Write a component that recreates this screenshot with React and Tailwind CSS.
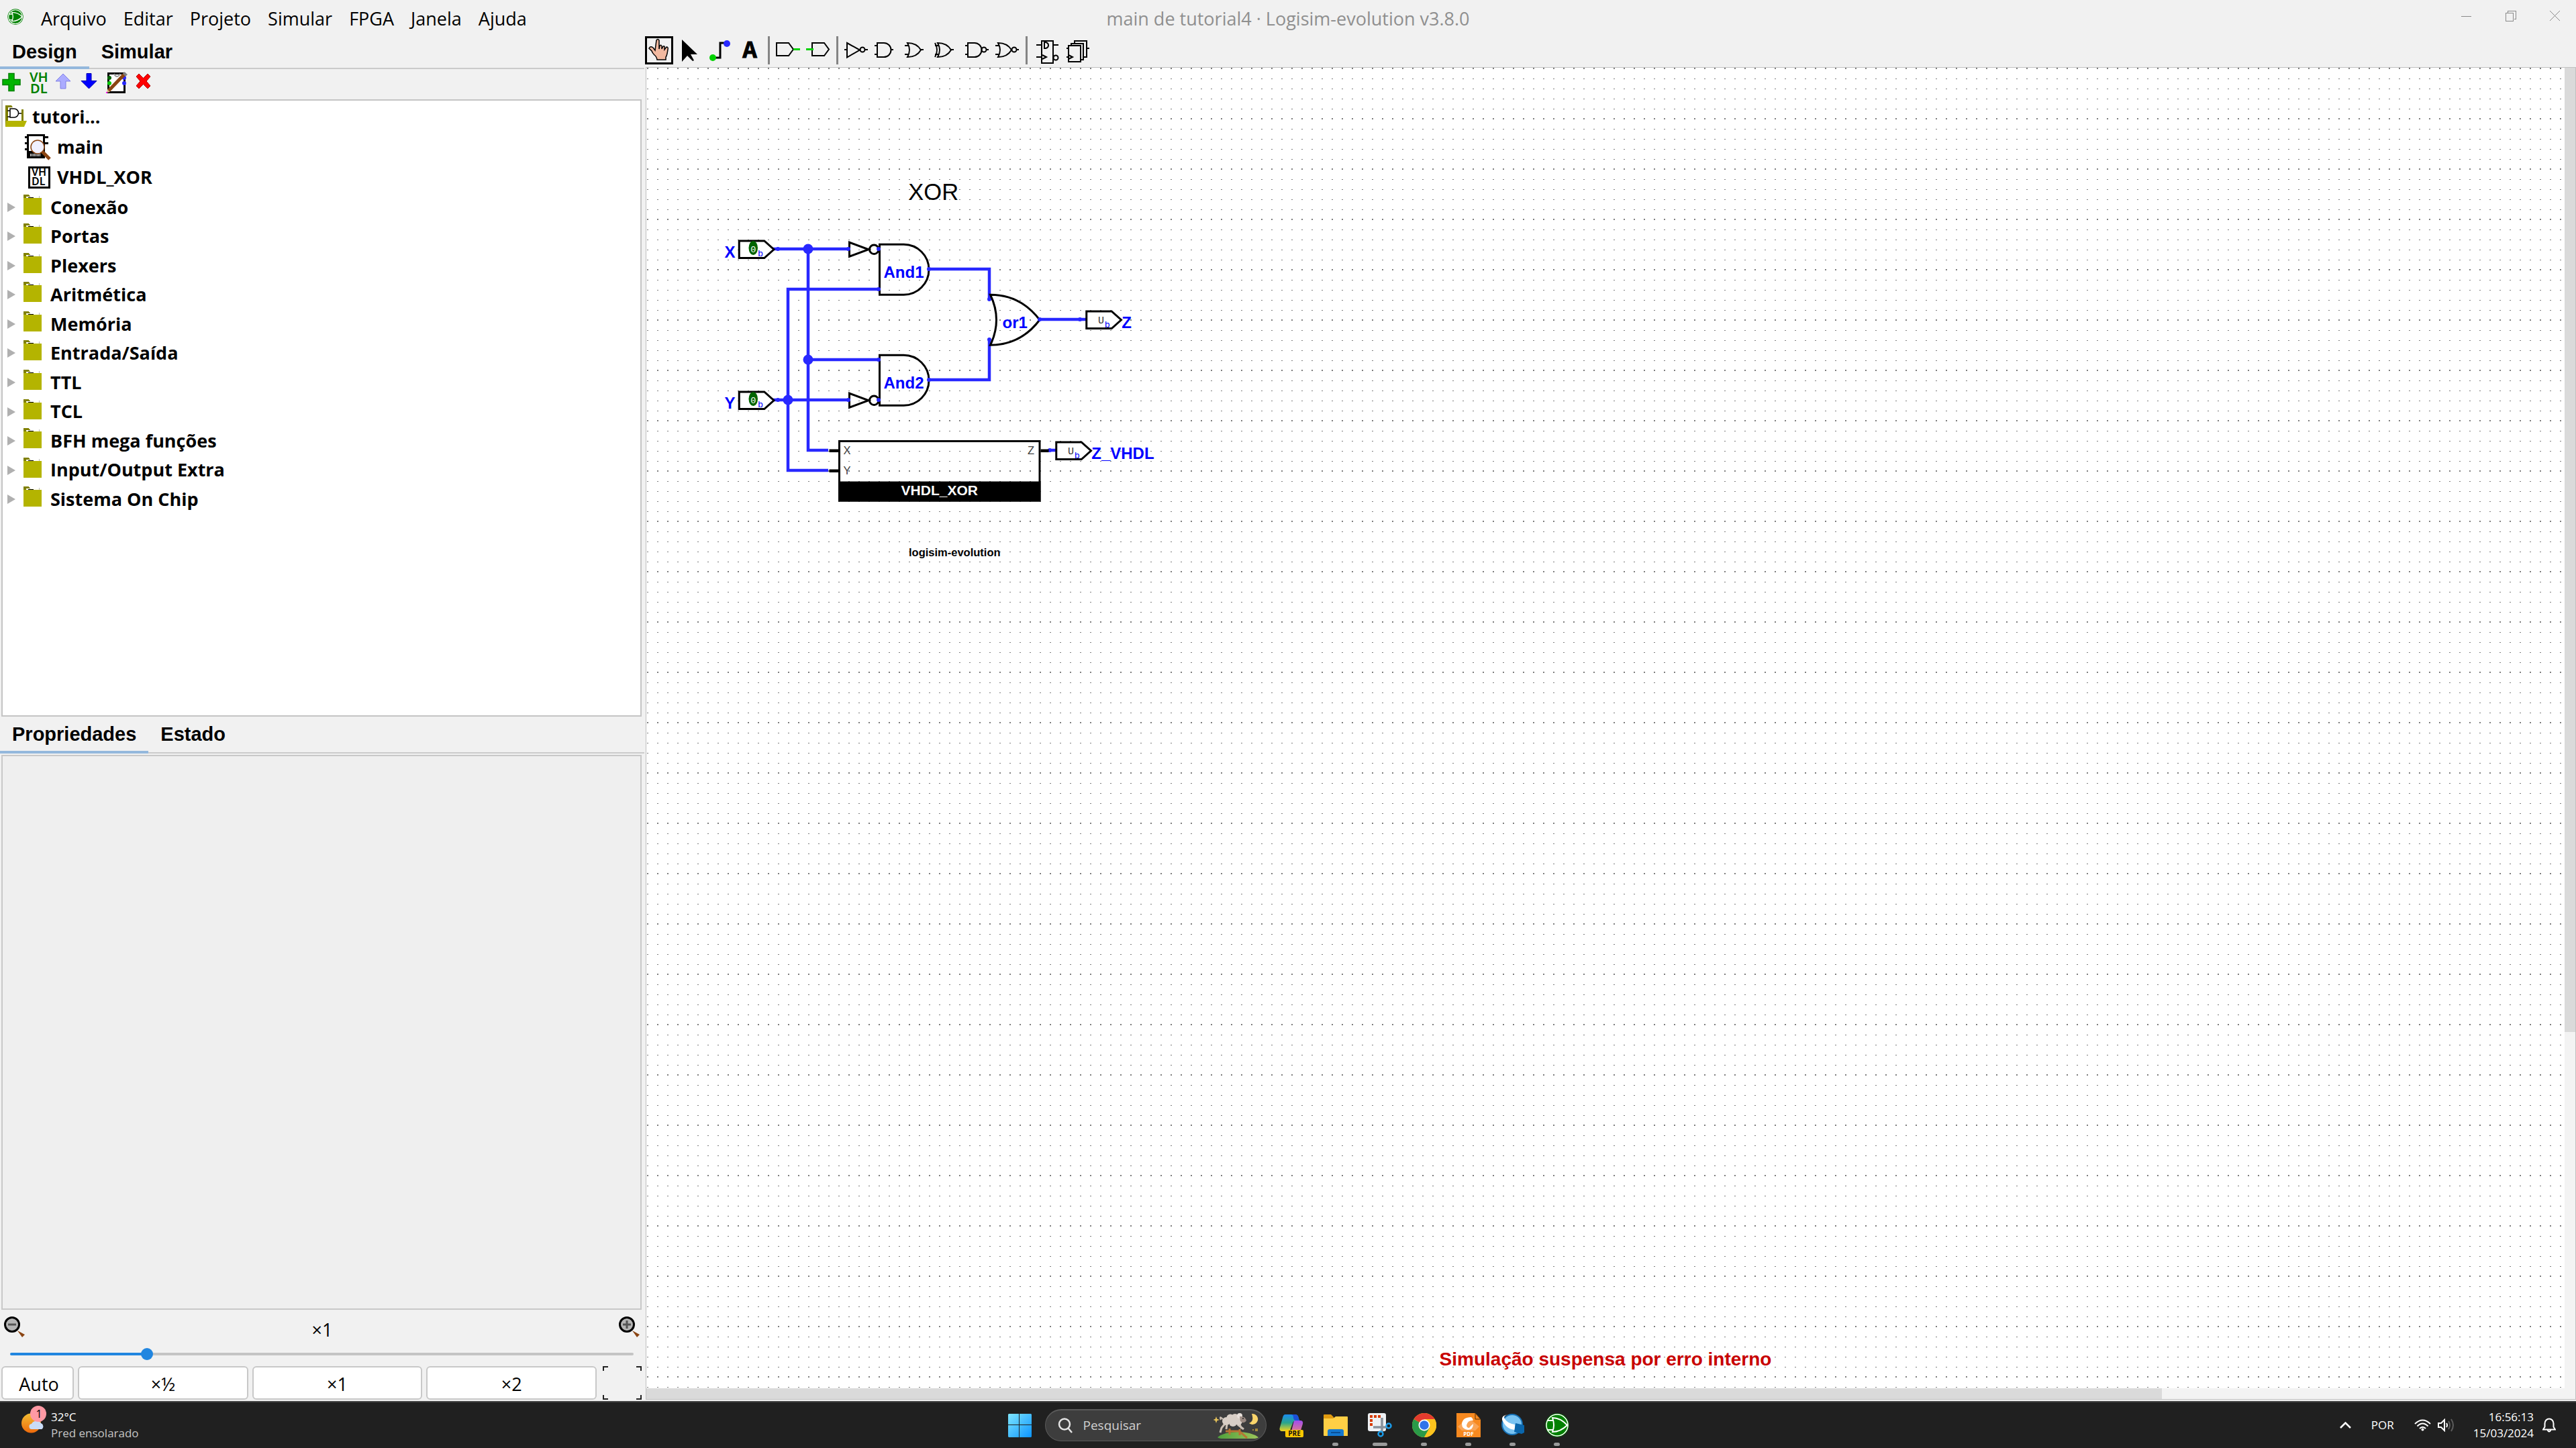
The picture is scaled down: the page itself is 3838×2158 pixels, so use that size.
import React, { useState } from "react";

const MENUS = ["Arquivo", "Editar", "Projeto", "Simular", "FPGA", "Janela", "Ajuda"];
const LIBRARIES = [
  "Conexão", "Portas", "Plexers", "Aritmética", "Memória", "Entrada/Saída",
  "TTL", "TCL", "BFH mega funções", "Input/Output Extra", "Sistema On Chip",
];

function LogisimLogo({ className }) {
  return (
    <svg viewBox="0 0 36 36" className={className} aria-hidden="true">
      <circle cx="18" cy="18" r="17.5" fill="#008000" />
      <circle cx="18" cy="18" r="15.5" fill="none" stroke="#fff" strokeWidth="1.6" />
      <path d="M10 8q14 0 23 10q-9 10-23 10q5-10 0-20zM3 12h9M3 25h9" fill="none" stroke="#fff" strokeWidth="2" />
    </svg>
  );
}

/* ---------- title bar ---------- */

function WindowButton({ label, children }) {
  return (
    <button aria-label={label} className="flex h-12 w-[66px] items-center justify-center">
      <svg width="16" height="16" viewBox="0 0 16 16" fill="none" stroke="#8a8a8a" shapeRendering="crispEdges">
        {children}
      </svg>
    </button>
  );
}

function TitleBar() {
  return (
    <header className="grid h-14 grid-cols-[1fr_auto_1fr] items-start text-[27px] leading-[56px]">
      <div className="flex">
        <LogisimLogo className="mt-[13px] ml-[11px] h-6 w-6" />
        <nav className="ml-[26px] flex gap-[25px]">
          {MENUS.map((m) => (
            <button key={m} className="leading-[56px]">{m}</button>
          ))}
        </nav>
      </div>
      <h1 className="text-[#8f8f8f]">main de tutorial4 · Logisim-evolution v3.8.0</h1>
      <div className="-mr-[2px] flex justify-end">
        <WindowButton label="Minimizar"><path d="M0 8.500h15" /></WindowButton>
        <WindowButton label="Restaurar"><path d="M.5 3.500h11v12h-11zM3.500 3.500v-3h12v12h-3" /></WindowButton>
        <WindowButton label="Fechar"><path d="M0 0l15 15M15 0l-15 15" shapeRendering="auto" /></WindowButton>
      </div>
    </header>
  );
}

/* ---------- side bar ---------- */

function Tabs({ items, className }) {
  const [active, setActive] = useState(0);
  return (
    <div role="tablist" className={"flex border-b-2 border-[#cbcbcb] font-['Liberation_Sans',sans-serif] text-[29px] font-bold " + className}>
      {items.map((t, i) => (
        <button
          key={t}
          role="tab"
          aria-selected={i === active}
          onClick={() => setActive(i)}
          className={i === active ? "-mb-[2px] border-b-4 border-[#94b8dc] px-[18px]" : "-mb-[2px] border-b-4 border-transparent px-[18px]"}
        >
          {t}
        </button>
      ))}
    </div>
  );
}

function ToolButton({ label, children }) {
  return (
    <button aria-label={label}>
      <svg width="39" height="36" viewBox="0 0 39 36" className="overflow-visible">{children}</svg>
    </button>
  );
}

function ProjectTools() {
  return (
    <div className="flex h-[45px] items-start pt-[2px]">
      <ToolButton label="Adicionar circuito">
        <path d="M13 4.500h8v9h9v8h-9v9h-8v-9h-9v-8h9z" fill="#00b400" stroke="#008000" strokeWidth="1.500" />
      </ToolButton>
      <ToolButton label="Adicionar VHDL">
        <text fill="#008000" className="font-['Noto_Sans',sans-serif] text-[20px] font-semibold">
          <tspan x="5" y="17">VH</tspan>
          <tspan x="6" y="34">DL</tspan>
        </text>
      </ToolButton>
      <ToolButton label="Mover para cima">
        <path d="M16 5l11 11h-7v11h-8v-11h-7z" fill="#acacff" stroke="#8080e6" />
      </ToolButton>
      <ToolButton label="Mover para baixo">
        <path d="M12 4.500h7v11h8l-11.500 11.500l-11.500-11.500h8z" fill="#0000ff" stroke="#0000b4" />
      </ToolButton>
      <ToolButton label="Editar aparência">
        <rect x="5.500" y="4.500" width="24" height="28" fill="#fff" stroke="#000" strokeWidth="3" />
        <path d="M14 5q4 8 9 0" fill="none" stroke="#999" strokeWidth="2" />
        <circle cx="7" cy="11" r="3" fill="#006400" />
        <circle cx="7" cy="19" r="3" fill="#00c800" />
        <circle cx="29" cy="11" r="3" fill="#2828ff" />
        <circle cx="29" cy="19" r="3" fill="#2828ff" />
        <path d="M6 30L30 5" stroke="#8b4513" strokeWidth="5" />
        <path d="M29 2l5 4l-3 3l-4-4z" fill="#808080" />
        <path d="M4 28l4 4l-5 1z" fill="#deb887" />
        <path d="M2 32h2v2h-2z" fill="#ff00ff" />
      </ToolButton>
      <ToolButton label="Remover">
        <path d="M12 5l6.500 6.500l6.500-6.500l4 4l-6 7l6 7l-4 4l-6.500-6.500l-6.500 6.500l-4-4l6-7l-6-7z" fill="#ff0000" stroke="#b40000" />
      </ToolButton>
    </div>
  );
}

function FolderIcon() {
  return (
    <svg width="28" height="32" viewBox="0 0 28 32" className="mb-2" shapeRendering="crispEdges">
      <path d="M0 7V1h8l2 3h-6v3z" fill="#808000" />
      <path d="M7 5h8" stroke="#000" strokeWidth="1" />
      <path d="M23.500 3v4" stroke="#bbb" />
      <path d="M0 6h27v25H0z" fill="#b4b400" />
    </svg>
  );
}

function Explorer() {
  return (
    <div className="mr-1 ml-[2px] flex-[919] overflow-hidden border-2 border-[#c4c4c4] bg-white pt-[2px] text-[27px] font-bold">
      <div className="flex h-[45px] items-center pl-1">
        <svg width="32" height="32" viewBox="0 0 32 32" className="mb-1">
          <path d="M0 31V0h9l2 3h-7v28zM24 6h3v20h-3z" fill="#808000" />
          <path d="M4 7h19v17H4z" fill="#fff" />
          <path d="M7 5h6a6.500 6.500 0 0 1 0 13h-6zM3 8h4M3 17h4M19 12h5" fill="none" stroke="#000" strokeWidth="1.500" />
          <path d="M1 23h31l-4 9H0z" fill="#b4b400" />
        </svg>
        <span className="ml-2">tutori...</span>
      </div>
      <div className="flex h-[45px] items-center pl-[33px]">
        <svg width="40" height="39" viewBox="0 0 40 39">
          <path d="M4.500 1.500h24v33h-24z" fill="#fff" stroke="#000" strokeWidth="3" />
          <path d="M0 4.500h4M0 13.500h4M0 22.500h4M29 4.500h6M29 13.500h6" stroke="#000" strokeWidth="3" />
          <path d="M4 25h25v10H4z" />
          <path d="M8 31h16" stroke="#fff" strokeWidth="4" strokeDasharray="1 1" />
          <path d="M25 25l12 12" stroke="#8b4513" strokeWidth="5" />
          <circle cx="19" cy="19" r="10" fill="#f0f0ff" stroke="#8b4513" strokeWidth="1.500" />
        </svg>
        <span className="ml-2">main</span>
      </div>
      <div className="flex h-[45px] items-center pl-[38px]">
        <svg width="33" height="33" viewBox="0 0 33 33" className="overflow-visible">
          <path d="M1.500 1.500h30v30h-30z" fill="#fff" stroke="#000" strokeWidth="3" />
          <text className="font-['Noto_Sans',sans-serif] text-[16px] font-semibold">
            <tspan x="5" y="14">VH</tspan>
            <tspan x="5" y="28">DL</tspan>
          </text>
        </svg>
        <span className="ml-[10px]">VHDL_XOR</span>
      </div>
      <ul className="grid h-[479px] auto-rows-fr">
        {LIBRARIES.map((name) => (
          <li key={name} className="flex items-center pl-[7px]">
            <svg width="12" height="14" viewBox="0 0 12 14"><path d="M0 0l12 7l-12 7z" fill="#b0b0b0" /></svg>
            <span className="ml-3 flex"><FolderIcon /></span>
            <span className="ml-3">{name}</span>
          </li>
        ))}
      </ul>
    </div>
  );
}

function Magnifier({ plus }) {
  return (
    <svg width="32" height="32" viewBox="0 0 32 32">
      <circle cx="12" cy="12" r="10.500" fill="#b4b4b4" stroke="#000" strokeWidth="3" />
      <path d={plus ? "M6 12h12M12 6v12" : "M6 12h12"} stroke="#555" strokeWidth="3" />
      <path d="M20 21l11 6l-4 4z" fill="#8b4513" />
    </svg>
  );
}

const ZOOM_BUTTON = "flex-1 rounded-md border-2 border-[#c8c8c8] bg-white pt-1";

function ZoomPanel() {
  const [zoom, setZoom] = useState(214);
  return (
    <div className="h-[136px] pt-[10px] text-[27px]">
      <div className="flex items-start justify-between pr-[6px] pl-[6px]">
        <button aria-label="Diminuir zoom"><Magnifier /></button>
        <span className="leading-[40px]">×1</span>
        <button aria-label="Aumentar zoom"><Magnifier plus /></button>
      </div>
      <div className="mt-[7px] flex pr-4 pl-[15px]">
        <input
          type="range"
          aria-label="Zoom"
          max="1000"
          value={zoom}
          onChange={(e) => setZoom(Number(e.target.value))}
          className="h-[18px] w-full appearance-none bg-transparent [&::-webkit-slider-runnable-track]:h-1 [&::-webkit-slider-runnable-track]:rounded-full [&::-webkit-slider-runnable-track]:bg-[linear-gradient(to_right,#2186e0_22%,#c4c4c4_22%)] [&::-webkit-slider-thumb]:-mt-[7px] [&::-webkit-slider-thumb]:h-[18px] [&::-webkit-slider-thumb]:w-[18px] [&::-webkit-slider-thumb]:appearance-none [&::-webkit-slider-thumb]:rounded-full [&::-webkit-slider-thumb]:bg-[#2186e0]"
        />
      </div>
      <div className="mt-[9px] mr-[4px] ml-[2px] flex h-[50px] gap-[6px]">
        <button className="w-[108px] rounded-md border-2 border-[#c8c8c8] bg-white pt-1 pl-1">Auto</button>
        <button className={ZOOM_BUTTON}>×½</button>
        <button className={ZOOM_BUTTON}>×1</button>
        <button className={ZOOM_BUTTON}>×2</button>
        <button aria-label="Ajustar à janela" className="ml-[3px]">
          <svg width="58" height="50" viewBox="0 0 58 50" fill="none" stroke="#222" strokeWidth="2" shapeRendering="crispEdges">
            <path d="M1 7V1h7M50 1h7v6M1 43v6h7M50 49h7v-6" />
          </svg>
        </button>
      </div>
    </div>
  );
}

function SideBar() {
  return (
    <aside className="flex w-[960px] shrink-0 flex-col">
      <Tabs items={["Design", "Simular"]} className="h-[47px]" />
      <ProjectTools />
      <Explorer />
      <Tabs items={["Propriedades", "Estado"]} className="h-[55px] pt-1" />
      <div className="mt-[2px] mr-1 ml-[2px] flex-[828] border-2 border-[#c8c8c8] bg-[#efefef]" />
      <ZoomPanel />
    </aside>
  );
}

/* ---------- circuit tool bar ---------- */

function CircuitTool({ label, children }) {
  return (
    <button aria-label={label}>
      <svg width="42" height="42" viewBox="0 0 42 42" fill="none" stroke="#000" strokeWidth="2">{children}</svg>
    </button>
  );
}

function Separator() {
  return <div className="mx-[3px] h-[42px] w-[3px] bg-[#848484]" />;
}

const AND_BODY = "M7 10h10a10.500 10.500 0 0 1 0 21h-10z";
const OR_BODY = "M7 10q14 0 20 10.500q-6 10.500-20 10.500q6-10.500 0-21z";

function CircuitToolBar() {
  return (
    <div className="flex h-[46px] items-start gap-[3px] pl-px">
      <CircuitTool label="Testar">
        <rect x="1.500" y="1.500" width="39" height="39" strokeWidth="3" />
        <path
          d="M17 6q2-3 4 0v13l1-5q3-2 3 2v3l2-4q3-1 2 3v2l3-4q3 0 2 4l-1 6q-1 4-2 5v4h-13q-1-5-4-7q-3-3-4-6l-4-4q2-4 6-1l3 4z"
          fill="#f2b9a0"
          strokeWidth="1.500"
        />
      </CircuitTool>
      <CircuitTool label="Selecionar">
        <path d="M10 5l23 22h-10l5 9l-2 1l-8-8l-8 9z" fill="#000" stroke="none" />
      </CircuitTool>
      <CircuitTool label="Conectar">
        <path d="M14 32h8v-22h7" strokeWidth="3" />
        <circle cx="11" cy="32" r="5" fill="#00d200" stroke="none" />
        <circle cx="32" cy="11" r="5" fill="#2828ff" stroke="none" />
      </CircuitTool>
      <CircuitTool label="Texto">
        <text x="21" y="32" textAnchor="middle" fill="#000" strokeWidth="1" className="font-['Liberation_Mono',monospace] text-[36px] font-bold">A</text>
      </CircuitTool>
      <Separator />
      <CircuitTool label="Entrada">
        <path d="M4 10h18l7 9.500l-7 9.500h-18z" />
        <path d="M29 19.500h10" stroke="#00d200" strokeWidth="3" />
      </CircuitTool>
      <CircuitTool label="Saída">
        <path d="M12 10h18l7 9.500l-7 9.500h-18z" />
        <path d="M3 19.500h11" stroke="#00d200" strokeWidth="3" />
      </CircuitTool>
      <Separator />
      <CircuitTool label="Porta NOT"><path d="M3 20h4M7 10l19 10.500l-19 11z M34 20h4" /><circle cx="30" cy="20" r="3.500" /></CircuitTool>
      <CircuitTool label="Porta AND"><path d={AND_BODY} /><path d="M3 14h4M3 27h4M28 20h3" /></CircuitTool>
      <CircuitTool label="Porta OR"><path d={OR_BODY} /><path d="M3 14h5M3 27h5M27 20h4" /></CircuitTool>
      <CircuitTool label="Porta XOR"><path d={OR_BODY} /><path d="M3 10q6 10.500 0 21M3 14h5M3 27h5M27 20h4" /></CircuitTool>
      <CircuitTool label="Porta NAND"><path d={AND_BODY} /><path d="M3 14h4M3 27h4M35 20h3" /><circle cx="31" cy="20" r="3.500" /></CircuitTool>
      <CircuitTool label="Porta NOR"><path d={OR_BODY} /><path d="M3 14h5M3 27h5M35 20h3" /><circle cx="31" cy="20" r="3.500" /></CircuitTool>
      <Separator />
      <CircuitTool label="Flip-flop D">
        <rect x="15" y="7" width="17" height="33" />
        <path d="M7 13h8M7 31h8M32 13h8M19 9v9h2q4-1 4-4.500t-4-4.500zM16 28l6 3l-6 3" />
        <circle cx="36" cy="32" r="3.500" />
      </CircuitTool>
      <CircuitTool label="Registrador">
        <path d="M19 10v-3h18v24h-4M14 14v-3h18v24h-4M37 18h4M7 18h3M7 31h3M10 28l6 3l-6 3" />
        <rect x="10" y="14" width="18" height="24" />
      </CircuitTool>
    </div>
  );
}

/* ---------- canvas ---------- */

const WIRE = "#2828ff";

function Pin({ x, y, left, children }) {
  return (
    <g>
      <path d={`M${left} ${y - 8}h25l9.500 8.500l-9.500 8.500h-25z`} fill="#fff" stroke="#000" strokeWidth="2" />
      {children}
      <circle cx={x} cy={y} r="2" fill={WIRE} />
    </g>
  );
}

function InputPin({ y, name }) {
  return (
    <Pin x={130} y={y} left={91.5}>
      <ellipse cx="105.500" cy={y - 1} rx="4.500" ry="7" fill="#006400" />
      <text x="105.500" y={y + 3.5} textAnchor="middle" fill="#fff" className="font-['Liberation_Mono',monospace] text-[9px]">0</text>
      <text x="110" y={y + 7} fill="#0000ff" className="font-['Liberation_Mono',monospace] text-[9px]">b</text>
      <text x="77" y={y + 8.5} fill="#0000ff" className="text-[16px] font-bold">{name}</text>
    </Pin>
  );
}

function OutputPin({ x, y, name }) {
  return (
    <Pin x={x} y={y} left={x + 6.5}>
      <text x={x + 18} y={y + 4} fill="#333" className="font-['Liberation_Mono',monospace] text-[10px]">U</text>
      <text x={x + 24.500} y={y + 8} fill="#0000ff" className="font-['Liberation_Mono',monospace] text-[9px]">b</text>
      <text x={x + 41.500} y={y + 8.500} fill="#0000ff" className="text-[16px] font-bold">{name}</text>
    </Pin>
  );
}

function Inverter({ y }) {
  return (
    <g>
      <path d={`M201 ${y - 6.5}l19 7l-19 7z`} fill="none" stroke="#000" strokeWidth="2" />
      <circle cx="225.500" cy={y + 0.5} r="4.500" fill="none" stroke="#000" strokeWidth="2" />
      <circle cx="230" cy={y} r="2" fill={WIRE} />
      <circle cx="200" cy={y} r="2" fill={WIRE} />
    </g>
  );
}

function AndGate({ y, name }) {
  return (
    <g>
      <path d={`M231 ${y - 24.5}h24a25 25 0 0 1 0 50h-24z`} fill="none" stroke="#000" strokeWidth="2" />
      <text x="235" y={y + 8.5} fill="#0000ff" className="text-[16px] font-bold">{name}</text>
      <circle cx="280" cy={y} r="2" fill={WIRE} />
    </g>
  );
}

/* One schematic unit is 1.5 px, the grid step is 10 units. */
function Circuit() {
  return (
    <g transform="translate(1 0) scale(1.5)" className="font-['Liberation_Sans',sans-serif]">
      <text x="284.500" y="131" textAnchor="middle" className="text-[23px]">XOR</text>
      <path
        d="M125 180h75M160 180v200h20M160 290h70M125 330h75M230 220h-90v180h40M280 200h60v30M280 310h60v-40M390 250h46M400 380h7"
        fill="none"
        stroke={WIRE}
        strokeWidth="3"
      />
      <circle cx="160" cy="180" r="5" fill={WIRE} />
      <circle cx="160" cy="290" r="5" fill={WIRE} />
      <circle cx="140" cy="330" r="5" fill={WIRE} />
      <InputPin y={180} name="X" />
      <InputPin y={330} name="Y" />
      <AndGate y={200} name="And1" />
      <AndGate y={310} name="And2" />
      <Inverter y={180} />
      <Inverter y={330} />
      {[[230, 220], [230, 290], [340, 230], [340, 270]].map(([x, y]) => (
        <circle key={x + "-" + y} cx={x} cy={y} r="2" fill={WIRE} />
      ))}
      <path d="M341 225.500q30 0 49 25q-19 25-49 25q12-25 0-50z" fill="none" stroke="#000" strokeWidth="2" />
      <circle cx="390" cy="250" r="2" fill={WIRE} />
      <text x="353" y="258.500" fill="#0000ff" className="text-[16px] font-bold">or1</text>
      <OutputPin x={430} y={250} name="Z" />
      <OutputPin x={400} y={380} name="Z_VHDL" />
      <path d="M181 380.500h9M181 400.500h9M391 380.500h8" stroke="#000" strokeWidth="3" />
      <rect x="191" y="371" width="199" height="59" fill="none" stroke="#000" strokeWidth="2" />
      <rect x="190" y="411" width="201" height="20" />
      <g fill="#404040" className="text-[11px]">
        <text x="195" y="384">X</text>
        <text x="195" y="404">Y</text>
        <text x="378" y="384">Z</text>
      </g>
      <text x="290.500" y="424.500" textAnchor="middle" fill="#fff" className="text-[14px] font-bold">VHDL_XOR</text>
      <text x="260" y="485.500" className="text-[11px] font-bold">logisim-evolution</text>
    </g>
  );
}

function Canvas() {
  return (
    <div className="ml-[2px] grid min-h-0 flex-1 grid-cols-[1fr_16px] grid-rows-[1fr_16px] border border-[#c0c0c0] bg-[#f3f3f3]">
      <div className="relative overflow-hidden bg-white">
        <svg className="absolute inset-0 h-full w-full">
          <defs>
            <pattern id="grid" width="15" height="75" patternUnits="userSpaceOnUse">
              <path d="M1 0h2v2h-2zM1 16h2v1h-2zM1 31h2v1h-2zM1 46h2v1h-2zM1 61h2v1h-2z" fill="#7d7d7d" />
            </pattern>
          </defs>
          <rect width="100%" height="100%" fill="url(#grid)" />
          <Circuit />
        </svg>
        <p className="absolute inset-x-0 bottom-[22px] text-center font-['Liberation_Sans',sans-serif] text-[28px] font-bold text-[#c80000]">
          Simulação suspensa por erro interno
        </p>
      </div>
      <div><div className="h-[73%] bg-[#dadada]" /></div>
      <div><div className="h-full w-[79%] bg-[#dadada]" /></div>
    </div>
  );
}

/* ---------- task bar ---------- */

function TaskButton({ label, dot, children }) {
  return (
    <button aria-label={label} className="flex h-full w-[66px] flex-col items-center pt-4">
      <svg width="36" height="36" viewBox="0 0 36 36">{children}</svg>
      {dot && <span className={dot === "wide" ? "mt-2 h-[5px] w-[22px] rounded-full bg-[#9a9a9a]" : "mt-2 h-[5px] w-[9px] rounded-full bg-[#9a9a9a]"} />}
    </button>
  );
}

function Sheep() {
  return (
    <svg width="68" height="38" viewBox="0 0 68 38" className="ml-auto" aria-hidden="true">
      <defs>
        <linearGradient id="hill" x1="0" x2="1"><stop offset="0" stopColor="#4fa03c" /><stop offset="1" stopColor="#9cc45a" /></linearGradient>
      </defs>
      <path d="M6 36q10-8 30-8t31 8q-2 2-8 2H14q-6 0-8-2z" fill="url(#hill)" />
      <path d="M18 27h22M24 23v9M39 24v9M40 28l10 9" stroke="#b87333" strokeWidth="3" fill="none" />
      <path d="M17 16l-5 6l-2 7M20 17l-1 7M36 17l9 7M38 15l4 8" stroke="#cbbfb4" strokeWidth="3" fill="none" />
      <path d="M14 9q-6-6-3 1" fill="none" stroke="#cbbfb4" strokeWidth="2" />
      <g fill="#d8cec6">
        <circle cx="19" cy="12" r="6" /><circle cx="25" cy="7" r="5.500" /><circle cx="32" cy="7" r="6" />
        <circle cx="37" cy="12" r="6" /><circle cx="29" cy="14" r="6" />
      </g>
      <circle cx="39" cy="4" r="4" fill="#e8e0da" />
      <path d="M39 5q8-1 10 6q-3 6-9 1z" fill="#9b8a82" />
      <circle cx="44" cy="8" r="1" fill="#222" />
      <path d="M57 1a8 8 0 1 1-4 14q8-3 4-14z" fill="#fbd56b" />
      <path d="M4 5l1.300 3.700l3.700 1.300l-3.700 1.300l-1.300 3.700l-1.300-3.700l-3.700-1.300l3.700-1.300z" fill="#e6c25a" />
      <path d="M62 23h4v4h-4zM58 24h2v2h-2z" fill="#a58a3c" />
    </svg>
  );
}

function TaskBar() {
  return (
    <footer className="grid h-[70px] grid-cols-[1fr_auto_1fr] border-t-2 border-[#444] bg-[#202020] text-[17px] text-white">
      <button className="flex items-start justify-self-start pl-[32px] text-left leading-6">
        <svg width="40" height="44" viewBox="0 0 40 44" className="mt-[5px]">
          <defs>
            <linearGradient id="sun" x2="0" y2="1"><stop offset="0" stopColor="#f2bd33" /><stop offset="1" stopColor="#ee6a0c" /></linearGradient>
          </defs>
          <circle cx="14.500" cy="26" r="14.500" fill="url(#sun)" />
          <path d="M16 35a4 4 0 0 1-1-8a8 7 0 0 1 14-1a5 5 0 0 1 1 9z" fill="#c9dcf7" />
          <circle cx="25" cy="12" r="12" fill="#ff99a4" />
          <text x="26" y="18" textAnchor="middle" className="text-[16px]">1</text>
        </svg>
        <span className="mt-[10px] ml-1">
          32°C<br />
          <span className="text-[#c4c4c4]">Pred ensolarado</span>
        </span>
      </button>

      <div className="flex">
        <TaskButton label="Iniciar">
          <defs>
            <linearGradient id="win" x2="1" y2="1"><stop offset="0" stopColor="#7fe6ff" /><stop offset="1" stopColor="#0c94ff" /></linearGradient>
          </defs>
          <path d="M2 1h15v16H1V2zM18 1h17l1 1v15h-18zM1 18h16v18H2l-1-1zM18 18h18v17l-1 1h-17z" fill="url(#win)" />
        </TaskButton>
        <label className="mt-[10px] mr-1 ml-[5px] flex h-12 w-[330px] items-center rounded-full border border-t-2 border-[#5a5a5a] bg-[#3d3d3d] pr-[10px] pl-[18px]">
          <svg width="22" height="23" viewBox="0 0 22 23" fill="none" stroke="#e4e4e4" strokeWidth="2.500">
            <circle cx="10" cy="9.500" r="8" /><path d="M15.500 15.500l5.500 6.500" />
          </svg>
          <input type="text" placeholder="Pesquisar" aria-label="Pesquisar" className="ml-4 w-[150px] bg-transparent text-[19px] outline-none placeholder:text-[#d0d0d0]" />
          <Sheep />
        </label>
        <TaskButton label="Copilot">
          <defs>
            <linearGradient id="cop1" x2="0" y2="1"><stop offset="0" stopColor="#1a8cf0" /><stop offset="0.500" stopColor="#2aa58c" /><stop offset="1" stopColor="#f4d51c" /></linearGradient>
            <linearGradient id="cop2" x2="0" y2="1"><stop offset="0" stopColor="#a04cf0" /><stop offset="1" stopColor="#f58a6a" /></linearGradient>
          </defs>
          <path d="M22 11h9q5 0 4 5l-4 13q-1 4-5 4H12q5 0 6-6z" fill="url(#cop2)" />
          <path d="M9 2h15q4 0 5 6l1 3h-5q-4 0-5 4l-3 8q-1 4-5 4H5q-6 0-4-6l4-14q1-5 4-5z" fill="url(#cop1)" />
          <path d="M17 2h7q4 0 5 6l1 3h-5q-4 0-4-5q0-4-4-4z" fill="#1c4fd8" />
          <rect x="9" y="25" width="27" height="11" rx="2" fill="#ffc800" />
          <text x="22.500" y="34" textAnchor="middle" fill="#111" className="text-[10px] font-bold">PRE</text>
        </TaskButton>
        <TaskButton label="Explorador de Arquivos" dot="small">
          <path d="M0 3q0-1 1-1h10l4 4v5H0z" fill="#e09a10" />
          <path d="M0 8h14l4-3h17q1 0 1 1v28H1q-1 0-1-1z" fill="#ffcf45" />
          <path d="M6 34v-7q0-3 3-3h18q3 0 3 3v7z" fill="#1478d0" />
          <path d="M11 29h14" stroke="#0a4f96" strokeWidth="2" />
        </TaskButton>
        <TaskButton label="Ferramenta de Captura" dot="wide">
          <rect x="0" y="0" width="27" height="27" rx="3" fill="#eef1f4" />
          <path d="M3 5h16" stroke="#d83b01" strokeWidth="4" strokeDasharray="4 2" />
          <path d="M5 9v10" stroke="#d83b01" strokeWidth="4" strokeDasharray="4 2" />
          <path d="M21 7v21M8 21h21" stroke="#8a929c" strokeWidth="3.500" />
          <circle cx="19" cy="31" r="3.500" fill="none" stroke="#1a9be8" strokeWidth="2.500" />
          <circle cx="31" cy="19" r="3.500" fill="none" stroke="#1a9be8" strokeWidth="2.500" />
        </TaskButton>
        <TaskButton label="Chrome" dot="small">
          <circle cx="18" cy="18" r="18" fill="#fcc31e" />
          <path d="M18 18L2.500 9A18 18 0 0 1 33.600 9z" fill="#e33b2e" />
          <path d="M2.400 9A18 18 0 0 0 18 36l8-14l-8-4z" fill="#2a9a48" />
          <path d="M18 9h15.600a18 18 0 0 1-15.600 27l8-14z" fill="#fcc31e" />
          <circle cx="18" cy="18" r="8.500" fill="#fff" />
          <circle cx="18" cy="18" r="6.800" fill="#2f74ea" />
        </TaskButton>
        <TaskButton label="Foxit PDF" dot="small">
          <path d="M0 0h28l8 9v27H0z" fill="#f7891f" />
          <path d="M28 0h8v9z" fill="#202020" />
          <path d="M28 0l8 9h-8z" fill="#f7891f" stroke="#5a3208" />
          <path d="M2 20l16-13l16 13l-6 6H8z" fill="#f9a557" />
          <path d="M22 6q-13 0-14 10q0 8 9 9q8 0 8-9q-4 3-6 6q-4 0-4-4q2-8 10-7q-1-4-3-5z" fill="#fff" />
          <text x="18" y="34" textAnchor="middle" fill="#fff" className="text-[8px] font-bold">PDF</text>
        </TaskButton>
        <TaskButton label="Navegador" dot="small">
          <circle cx="17" cy="17" r="15" fill="#79c3f2" stroke="#1670b4" strokeWidth="2" />
          <path d="M11 2q-10 1-9 8q6 14 19 15v-8q-12-2-16-10q0-4 6-5z" fill="#fff" />
          <path d="M22 15l13 3v11l-4 2l-11-3z" fill="#0a66ac" />
        </TaskButton>
        <TaskButton label="Logisim-evolution" dot="small">
          <circle cx="18" cy="18" r="17.500" fill="#008000" />
          <circle cx="18" cy="18" r="16" fill="none" stroke="#fff" strokeWidth="1.500" />
          <path d="M11 7q12 0 22 11q-10 10-22 10q4-10 0-21zM3 11h9M3 25h9" fill="none" stroke="#fff" strokeWidth="2" />
        </TaskButton>
      </div>

      <div className="flex items-center justify-self-end pr-[30px]">
        <button aria-label="Mostrar ícones ocultos">
          <svg width="17" height="10" viewBox="0 0 17 10" fill="none" stroke="#fff" strokeWidth="2.500"><path d="M1 9l7.500-7.500l7.500 7.500" /></svg>
        </button>
        <button className="ml-[30px]">POR</button>
        <button aria-label="Rede e som" className="ml-[30px] flex items-center gap-[10px]">
          <svg width="25" height="18" viewBox="0 0 25 18" fill="none" stroke="#fff" strokeWidth="2">
            <path d="M1 7q11.500-11 23 0M4.500 10.500q8-8 16 0M8 14q4.500-4.500 9 0" />
            <circle cx="12.500" cy="15.500" r="2" fill="#fff" stroke="none" />
          </svg>
          <svg width="25" height="20" viewBox="0 0 25 20" fill="none" stroke="#fff" strokeWidth="2">
            <path d="M1 7h4l5-5v16l-5-5h-4zM13 7q2 3 0 6" />
            <path d="M16 4q4 6 0 12M20 1q6 9 0 18" stroke="#5c5c5c" />
          </svg>
        </button>
        <button className="ml-7 text-right leading-6">16:56:13<br />15/03/2024</button>
        <button aria-label="Notificações" className="ml-[13px]">
          <svg width="20" height="22" viewBox="0 0 20 22" fill="none" stroke="#fff" strokeWidth="2">
            <path d="M1 17.500l2.500-4v-5a6.500 7 0 0 1 13 0v5l2.500 4z" />
            <path d="M7.500 18q2.500 5 5 0" />
          </svg>
        </button>
      </div>
    </footer>
  );
}

export default function App() {
  return (
    <div className="flex h-screen flex-col overflow-hidden bg-[#f1f1f1] font-['Open_Sans',sans-serif] text-black">
      <TitleBar />
      <main className="flex min-h-0 flex-1">
        <SideBar />
        <section className="-mt-[2px] mb-[2px] flex min-w-0 flex-1 flex-col">
          <CircuitToolBar />
          <Canvas />
        </section>
      </main>
      <TaskBar />
    </div>
  );
}
